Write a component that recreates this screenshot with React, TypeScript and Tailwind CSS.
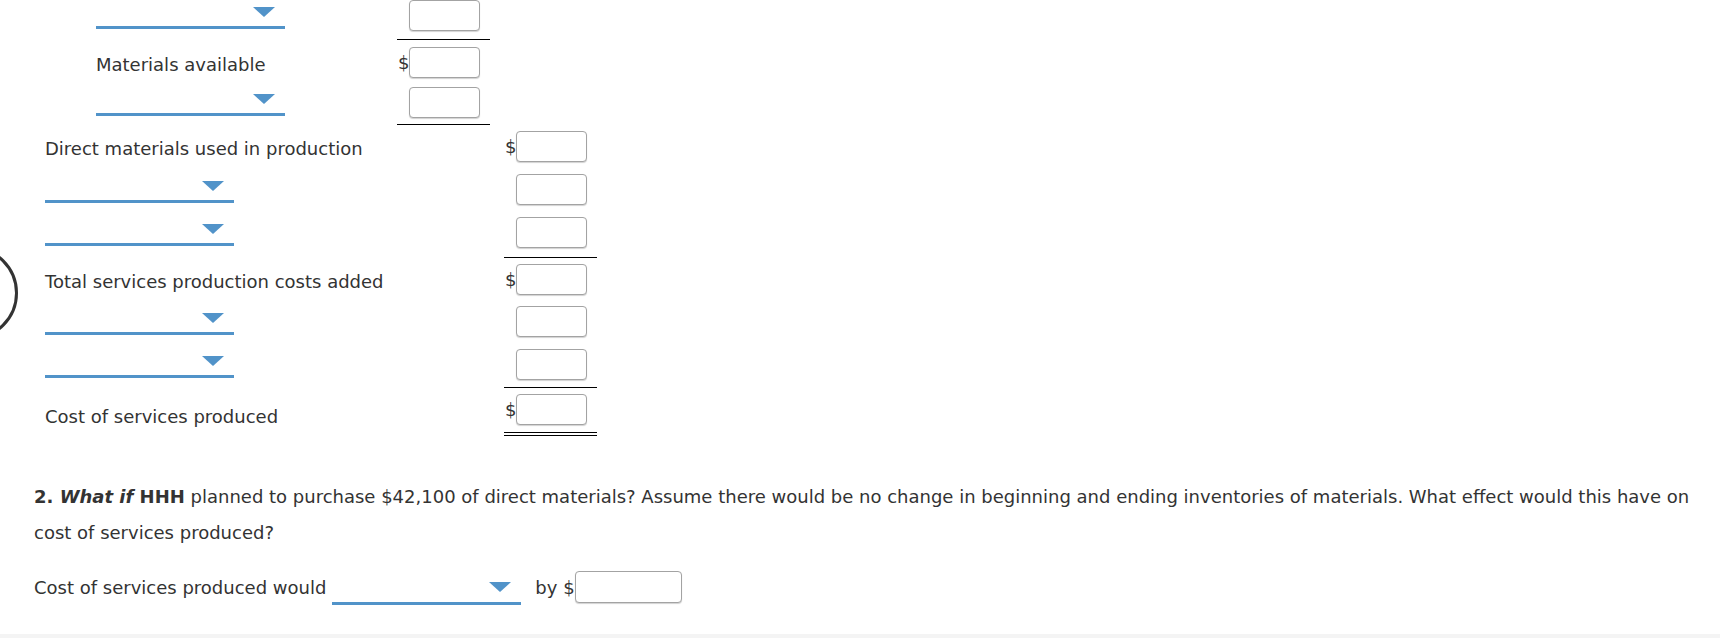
import React from "react";

type Border = "none" | "single" | "double";

interface RowProps {
  label?: React.ReactNode;
  labelPad?: string;
  dropdown?: boolean;
  dollar?: boolean;
  border?: Border;
  pt: string;
  pb: string;
}

function Dropdown({ className = "" }: { className?: string }) {
  return (
    <div
      className={`flex h-[29px] w-[189px] items-start justify-end border-b-[3px] border-[#5193c9] pr-[10px] pt-[7px] ${className}`}
    >
      <span className="h-0 w-0 border-l-[11px] border-r-[11px] border-t-[10px] border-l-transparent border-r-transparent border-t-[#5193c9]" />
    </div>
  );
}

function Amount({ dollar }: { dollar?: boolean }) {
  return (
    <div className="flex items-center">
      <span className="w-[12px] pl-[1px] leading-none">{dollar ? "$" : ""}</span>
      <input
        type="text"
        aria-label="amount"
        className="h-[31px] w-[71px] rounded-[4px] border border-[#a3a3a3] bg-white shadow-[0_1px_1px_rgba(0,0,0,0.18)] outline-none"
      />
    </div>
  );
}

function Row({ label, labelPad = "pt-[5px] leading-[20px]", dropdown, dollar, border = "none", pt, pb }: RowProps) {
  return (
    <div className="flex">
      <div className={`flex h-[31px] flex-1 box-content ${dropdown ? "items-start" : "items-center"} ${pt} ${pb}`}>
        {dropdown ? <Dropdown /> : <span className={labelPad}>{label}</span>}
      </div>
      <div
        className={`w-[93px] ${pt} ${pb} ${
          border === "single"
            ? "border-b border-black"
            : border === "double"
              ? "border-b-4 border-double border-black"
              : ""
        }`}
      >
        <Amount dollar={dollar} />
      </div>
    </div>
  );
}

export default function App() {
  return (
    <div className="relative flex h-[638px] flex-col overflow-hidden bg-white font-['DejaVu_Sans',Verdana,sans-serif] text-[18px] text-[#333]">
      {/* tool button peeking in from the left edge */}
      <div className="absolute left-[-76px] top-[246px] h-[94px] w-[94px] rounded-full border-[3px] border-[#333]" />

      {/* Schedule of cost of services produced */}
      <div className="w-[597px] pl-[45px]">
        <div className="w-[445px] pl-[51px]">
          <Row dropdown border="single" pt="pt-0" pb="pb-[8px]" />
          <Row label="Materials available" dollar pt="pt-[7px]" pb="pb-[3px]" />
          <Row dropdown border="single" pt="pt-[6px]" pb="pb-[6px]" />
        </div>
        <Row label="Direct materials used in production" dollar pt="pt-[6px]" pb="pb-[6px]" />
        <Row dropdown pt="pt-[6px]" pb="pb-[6px]" />
        <Row dropdown border="single" pt="pt-[6px]" pb="pb-[9px]" />
        <Row label="Total services production costs added" dollar pt="pt-[6px]" pb="pb-[5px]" />
        <Row dropdown pt="pt-[6px]" pb="pb-[6px]" />
        <Row dropdown border="single" pt="pt-[6px]" pb="pb-[7px]" />
        <Row
          label="Cost of services produced"
          labelPad="pt-[14px] leading-[16px]"
          dollar
          border="double"
          pt="pt-[6px]"
          pb="pb-[7px]"
        />
      </div>

      {/* Part 2 */}
      <p className="mt-[43px] w-[1704px] pl-[34px] leading-[36px]">
        <b>
          2. <i>What if</i> HHH
        </b>{" "}
        planned to purchase $42,100 of direct materials? Assume there would be no change in beginning
        and ending inventories of materials. What effect would this have on cost of services produced?
      </p>

      <div className="mt-[17px] flex items-center pl-[34px]">
        <span className="pt-[2px] leading-[24px]">Cost of services produced would</span>
        <Dropdown className="ml-[6px] mt-[3px] h-[34px] pt-[11px]" />
        <span className="ml-[14px] pt-[2px] leading-[24px]">by $</span>
        <input
          type="text"
          aria-label="effect amount"
          className="h-[32px] w-[107px] rounded-[4px] border border-[#a3a3a3] bg-white shadow-[0_1px_1px_rgba(0,0,0,0.18)] outline-none"
        />
      </div>

      <div className="flex-1" />
      <div className="h-[4px] bg-[#f4f4f4]" />
    </div>
  );
}
